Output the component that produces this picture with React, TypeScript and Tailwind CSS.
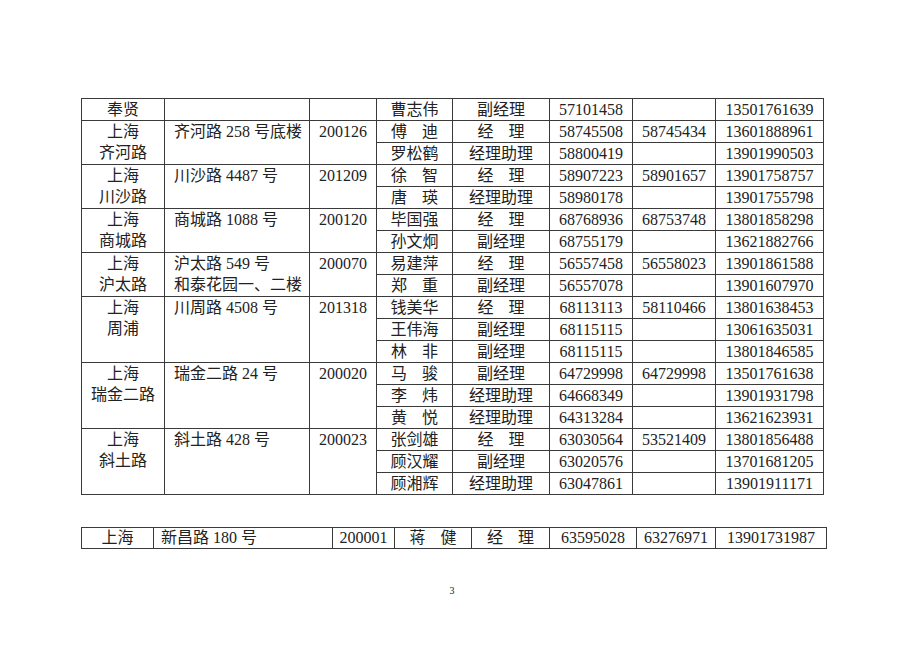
import React from "react";

type Person = [string, string, string, string, string];
type Group = { c1: string[]; addr: string[]; post: string; people: Person[] };

const groups: Group[] = [
  { c1: ["奉贤"], addr: [], post: "", people: [["曹志伟", "副经理", "57101458", "", "13501761639"]] },
  {
    c1: ["上海", "齐河路"], addr: ["齐河路 258 号底楼"], post: "200126",
    people: [
      ["傅迪", "经理", "58745508", "58745434", "13601888961"],
      ["罗松鹤", "经理助理", "58800419", "", "13901990503"],
    ],
  },
  {
    c1: ["上海", "川沙路"], addr: ["川沙路 4487 号"], post: "201209",
    people: [
      ["徐智", "经理", "58907223", "58901657", "13901758757"],
      ["唐瑛", "经理助理", "58980178", "", "13901755798"],
    ],
  },
  {
    c1: ["上海", "商城路"], addr: ["商城路 1088 号"], post: "200120",
    people: [
      ["毕国强", "经理", "68768936", "68753748", "13801858298"],
      ["孙文炯", "副经理", "68755179", "", "13621882766"],
    ],
  },
  {
    c1: ["上海", "沪太路"], addr: ["沪太路 549 号", "和泰花园一、二楼"], post: "200070",
    people: [
      ["易建萍", "经理", "56557458", "56558023", "13901861588"],
      ["郑重", "副经理", "56557078", "", "13901607970"],
    ],
  },
  {
    c1: ["上海", "周浦"], addr: ["川周路 4508 号"], post: "201318",
    people: [
      ["钱美华", "经理", "68113113", "58110466", "13801638453"],
      ["王伟海", "副经理", "68115115", "", "13061635031"],
      ["林非", "副经理", "68115115", "", "13801846585"],
    ],
  },
  {
    c1: ["上海", "瑞金二路"], addr: ["瑞金二路 24 号"], post: "200020",
    people: [
      ["马骏", "副经理", "64729998", "64729998", "13501761638"],
      ["李炜", "经理助理", "64668349", "", "13901931798"],
      ["黄悦", "经理助理", "64313284", "", "13621623931"],
    ],
  },
  {
    c1: ["上海", "斜土路"], addr: ["斜土路 428 号"], post: "200023",
    people: [
      ["张剑雄", "经理", "63030564", "53521409", "13801856488"],
      ["顾汉耀", "副经理", "63020576", "", "13701681205"],
      ["顾湘辉", "经理助理", "63047861", "", "13901911171"],
    ],
  },
];

function Spread({ text }: { text: string }) {
  if (text.length === 2) {
    return (
      <span className="inline-flex w-[47px] justify-between">
        <span>{text[0]}</span>
        <span>{text[1]}</span>
      </span>
    );
  }
  return <span>{text}</span>;
}

const td = "border border-[#3a3a3a] p-0 align-top whitespace-nowrap";

function Box({ children, h = 21, className = "" }: { children?: React.ReactNode; h?: number; className?: string }) {
  return (
    <div className={`flex items-center ${h === 21 ? "h-[21px]" : "h-[20px]"} ${className}`}>
      {children}
    </div>
  );
}

function Lines({ items, className }: { items: string[]; className: string }) {
  return (
    <>
      {items.map((t, i) => (
        <div key={i} className={`flex items-center ${i === 0 ? "h-[21px]" : "h-[22px]"} ${className}`}>
          {t}
        </div>
      ))}
    </>
  );
}

export default function App() {
  return (
    <div
      className="w-[920px] h-[651px] bg-white text-[#222] text-[16px] overflow-hidden"
      style={{ fontFamily: '"Liberation Serif", "Noto Sans CJK SC", serif' }}
    >
      <div className="pt-[98px] pl-[81px]">
        <table className="table-fixed border-collapse w-[742px]">
          <colgroup>
            <col className="w-[83px]" />
            <col className="w-[145px]" />
            <col className="w-[67px]" />
            <col className="w-[76px]" />
            <col className="w-[97px]" />
            <col className="w-[83px]" />
            <col className="w-[83px]" />
            <col className="w-[108px]" />
          </colgroup>
          <tbody>
            {groups.map((g, gi) =>
              g.people.map((p, pi) => (
                <tr key={`${gi}-${pi}`}>
                  {pi === 0 && (
                    <>
                      <td rowSpan={g.people.length} className={td}>
                        <Lines items={g.c1} className="justify-center" />
                      </td>
                      <td rowSpan={g.people.length} className={td}>
                        <Lines items={g.addr} className="pl-[9px]" />
                      </td>
                      <td rowSpan={g.people.length} className={td}>
                        <div className="h-[21px] flex items-center justify-center">{g.post}</div>
                      </td>
                    </>
                  )}
                  <td className={td}>
                    <Box className="justify-center">
                      <Spread text={p[0]} />
                    </Box>
                  </td>
                  <td className={td}>
                    <Box className="justify-center">
                      <Spread text={p[1]} />
                    </Box>
                  </td>
                  <td className={td}>
                    <Box className="justify-center">{p[2]}</Box>
                  </td>
                  <td className={td}>
                    <Box className="justify-center">{p[3]}</Box>
                  </td>
                  <td className={td}>
                    <Box className="justify-center">{p[4]}</Box>
                  </td>
                </tr>
              ))
            )}
          </tbody>
        </table>

        <table className="table-fixed border-collapse w-[745px] mt-[32px]">
          <colgroup>
            <col className="w-[72px]" />
            <col className="w-[179px]" />
            <col className="w-[62px]" />
            <col className="w-[77px]" />
            <col className="w-[78px]" />
            <col className="w-[87px]" />
            <col className="w-[79px]" />
            <col className="w-[111px]" />
          </colgroup>
          <tbody>
            <tr>
              <td className={td}>
                <Box h={20} className="justify-center">上海</Box>
              </td>
              <td className={td}>
                <Box h={20} className="pl-[7px]">新昌路 180 号</Box>
              </td>
              <td className={td}>
                <Box h={20} className="justify-center">200001</Box>
              </td>
              <td className={td}>
                <Box h={20} className="justify-center">
                  <Spread text="蒋健" />
                </Box>
              </td>
              <td className={td}>
                <Box h={20} className="justify-center">
                  <Spread text="经理" />
                </Box>
              </td>
              <td className={td}>
                <Box h={20} className="justify-center">63595028</Box>
              </td>
              <td className={td}>
                <Box h={20} className="justify-center">63276971</Box>
              </td>
              <td className={td}>
                <Box h={20} className="justify-center">13901731987</Box>
              </td>
            </tr>
          </tbody>
        </table>
      </div>
      <div className="mt-[36px] w-[904px] text-center text-[10px] leading-[12px]">3</div>
    </div>
  );
}
